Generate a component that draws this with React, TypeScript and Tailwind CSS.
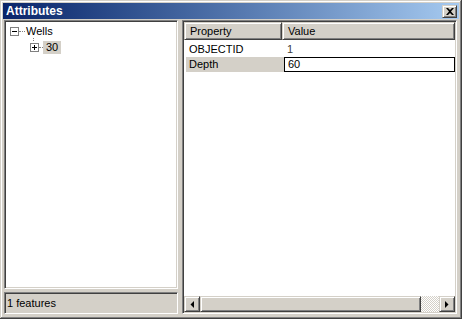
import React from 'react';

const sunken =
  'border border-t-[#808080] border-l-[#808080] border-b-white border-r-white shadow-[inset_1px_1px_#404040,inset_-1px_-1px_#d4d0c8]';
const raised =
  'border border-t-[#d4d0c8] border-l-[#d4d0c8] border-b-[#404040] border-r-[#404040] shadow-[inset_1px_1px_#ffffff,inset_-1px_-1px_#808080]';

const ExpandBox = ({ open }: { open: boolean }) => (
  <svg width="9" height="9" viewBox="0 0 9 9" className="shrink-0">
    <rect x="0.5" y="0.5" width="8" height="8" fill="#fff" stroke="#808080" />
    <path d="M2 4.5h5" stroke="#000" />
    {!open && <path d="M4.5 2v5" stroke="#000" />}
  </svg>
);

const Arrow = ({ dir }: { dir: 'left' | 'right' }) => (
  <svg width="4" height="7" viewBox="0 0 4 7">
    {dir === 'left' ? <path d="M4 0v7L0.5 3.5z" fill="#000" /> : <path d="M0 0v7l3.5-3.5z" fill="#000" />}
  </svg>
);

export default function App() {
  return (
    <div
      className="w-[462px] h-[319px] bg-[#d4d0c8] p-[3px] flex flex-col shadow-[inset_-1px_-1px_#404040,inset_1px_1px_#d4d0c8,inset_-2px_-2px_#808080,inset_2px_2px_#ffffff] text-[11px] text-black"
      style={{ fontFamily: '"Liberation Sans", Arial, sans-serif' }}
    >
      {/* Title bar */}
      <div className="h-[16px] flex items-center justify-between bg-gradient-to-r from-[#0a246a] to-[#a6caf0] pl-[3px] pr-[2px]">
        <span className="text-white font-bold text-[12px] leading-none">Attributes</span>
        <button className={`w-[15px] h-[13px] bg-[#d4d0c8] flex items-center justify-center ${raised}`}>
          <svg width="8" height="7" viewBox="0 0 8 7">
            <path d="M0 0h2l2 2 2-2h2L5 3.5 8 7H6L4 5 2 7H0l3-3.5z" fill="#000" />
          </svg>
        </button>
      </div>

      {/* Body */}
      <div className="flex-1 flex gap-[4px] pt-[1px] pl-[1px] pr-[2px] pb-[2px]">
        {/* Left column */}
        <div className="w-[174px] flex flex-col gap-[3px]">
          <div className={`flex-1 bg-white ${sunken} pt-[3px]`}>
            <div className="h-[14px] flex items-center pl-[5px]">
              <ExpandBox open />
              <div className="w-[6px] border-t border-dotted border-[#808080]" />
              <span className="ml-[1px]">Wells</span>
            </div>
            <div className="ml-[28px] h-[3px] border-l border-dotted border-[#808080]" />
            <div className="h-[13px] flex items-center pl-[25px]">
              <ExpandBox open={false} />
              <div className="w-[4px] border-t border-dotted border-[#808080]" />
              <span className="bg-[#d4d0c8] px-[3px] h-[13px] leading-[13px]">30</span>
            </div>
          </div>
          <div className={`h-[22px] flex items-center pl-[2px] ${sunken}`}>1 features</div>
        </div>

        {/* Right panel */}
        <div className={`flex-1 bg-white flex flex-col p-[1px] ${sunken}`}>
          <div className="flex h-[18px] bg-[#d4d0c8]">
            <div className={`w-[98px] flex items-center pl-[5px] ${raised}`}>Property</div>
            <div className={`flex-1 flex items-center pl-[5px] ${raised}`}>Value</div>
          </div>
          <div className="pt-[2px] pl-[2px]">
            <div className="h-[15px] flex items-center">
              <div className="w-[98px] pl-[3px]">OBJECTID</div>
              <div className="pl-[3px] text-[#404040]">1</div>
            </div>
            <div className="h-[15px] flex">
              <div className="w-[98px] pl-[3px] bg-[#d4d0c8] flex items-center">Depth</div>
              <div className="flex-1 border border-black flex items-center pl-[3px]">60</div>
            </div>
          </div>
          <div className="flex-1" />
          <div className="h-[16px] flex">
            <div className={`w-[16px] bg-[#d4d0c8] flex items-center justify-center ${raised}`}>
              <Arrow dir="left" />
            </div>
            <div className={`flex-1 bg-[#d4d0c8] ${raised}`} />
            <div className="w-[18px] bg-[repeating-conic-gradient(#d4d0c8_0_25%,#ffffff_0_50%)] bg-[length:2px_2px]" />
            <div className={`w-[16px] bg-[#d4d0c8] flex items-center justify-center ${raised}`}>
              <Arrow dir="right" />
            </div>
          </div>
        </div>
      </div>
    </div>
  );
}
